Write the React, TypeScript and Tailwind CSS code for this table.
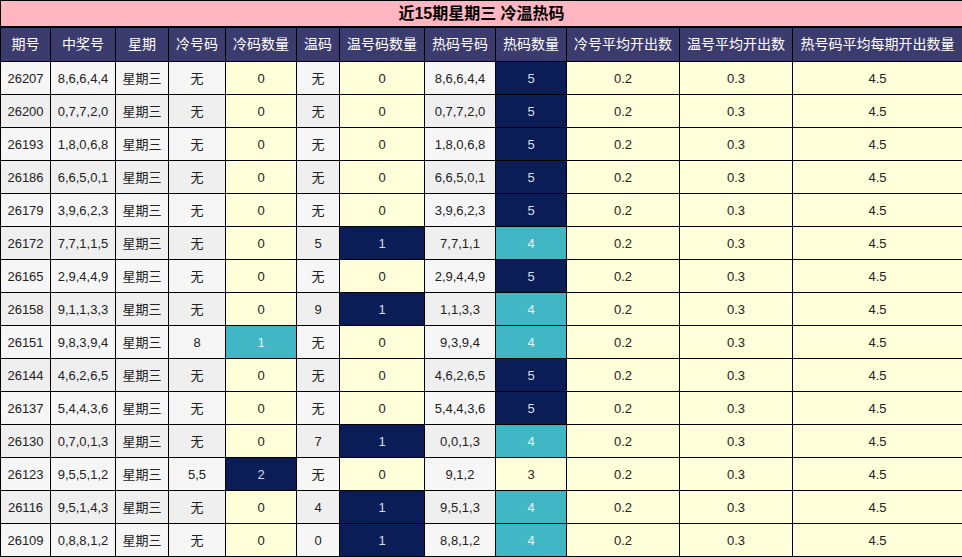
import React from 'react';

interface Row {
  issue: string;
  nums: string;
  cold: string;
  coldCount: number;
  warm: string;
  warmCount: number;
  hot: string;
  hotCount: number;
}

const rows: Row[] = [
  { issue: '26207', nums: '8,6,6,4,4', cold: '无', coldCount: 0, warm: '无', warmCount: 0, hot: '8,6,6,4,4', hotCount: 5 },
  { issue: '26200', nums: '0,7,7,2,0', cold: '无', coldCount: 0, warm: '无', warmCount: 0, hot: '0,7,7,2,0', hotCount: 5 },
  { issue: '26193', nums: '1,8,0,6,8', cold: '无', coldCount: 0, warm: '无', warmCount: 0, hot: '1,8,0,6,8', hotCount: 5 },
  { issue: '26186', nums: '6,6,5,0,1', cold: '无', coldCount: 0, warm: '无', warmCount: 0, hot: '6,6,5,0,1', hotCount: 5 },
  { issue: '26179', nums: '3,9,6,2,3', cold: '无', coldCount: 0, warm: '无', warmCount: 0, hot: '3,9,6,2,3', hotCount: 5 },
  { issue: '26172', nums: '7,7,1,1,5', cold: '无', coldCount: 0, warm: '5', warmCount: 1, hot: '7,7,1,1', hotCount: 4 },
  { issue: '26165', nums: '2,9,4,4,9', cold: '无', coldCount: 0, warm: '无', warmCount: 0, hot: '2,9,4,4,9', hotCount: 5 },
  { issue: '26158', nums: '9,1,1,3,3', cold: '无', coldCount: 0, warm: '9', warmCount: 1, hot: '1,1,3,3', hotCount: 4 },
  { issue: '26151', nums: '9,8,3,9,4', cold: '8', coldCount: 1, warm: '无', warmCount: 0, hot: '9,3,9,4', hotCount: 4 },
  { issue: '26144', nums: '4,6,2,6,5', cold: '无', coldCount: 0, warm: '无', warmCount: 0, hot: '4,6,2,6,5', hotCount: 5 },
  { issue: '26137', nums: '5,4,4,3,6', cold: '无', coldCount: 0, warm: '无', warmCount: 0, hot: '5,4,4,3,6', hotCount: 5 },
  { issue: '26130', nums: '0,7,0,1,3', cold: '无', coldCount: 0, warm: '7', warmCount: 1, hot: '0,0,1,3', hotCount: 4 },
  { issue: '26123', nums: '9,5,5,1,2', cold: '5,5', coldCount: 2, warm: '无', warmCount: 0, hot: '9,1,2', hotCount: 3 },
  { issue: '26116', nums: '9,5,1,4,3', cold: '无', coldCount: 0, warm: '4', warmCount: 1, hot: '9,5,1,3', hotCount: 4 },
  { issue: '26109', nums: '0,8,8,1,2', cold: '无', coldCount: 0, warm: '0', warmCount: 1, hot: '8,8,1,2', hotCount: 4 }
];

const headers = ['期号', '中奖号', '星期', '冷号码', '冷码数量', '温码', '温号码数量', '热码号码', '热码数量', '冷号平均开出数', '温号平均开出数', '热号码平均每期开出数量'];
const widths = ['w-[50px]', 'w-[65px]', 'w-[53px]', 'w-[57px]', 'w-[71px]', 'w-[43px]', 'w-[85px]', 'w-[71px]', 'w-[71px]', 'w-[113px]', 'w-[113px]', 'w-[170px]'];

const NAVY = 'bg-[#0b1d57] text-[#d6dde6]';
const TEAL = 'bg-[#41b6c4] text-[#e4f2f4]';
const YELLOW = 'bg-[#ffffd9] text-[#222]';

const coldClass = (n: number) => (n === 2 ? NAVY : n === 1 ? TEAL : YELLOW);
const warmClass = (n: number) => (n === 1 ? NAVY : YELLOW);
const hotClass = (n: number) => (n === 5 ? NAVY : n === 4 ? TEAL : YELLOW);

const App = () => {
  const td = 'border border-black text-center h-[33px] p-0 pt-[2px]';
  return <div className="w-[962px] h-[557px] overflow-hidden bg-white" style={{ fontFamily: '"Liberation Sans", "Noto Sans CJK SC", sans-serif' }}>
      <table className="table-fixed border-collapse w-[962px] text-[13px] text-[#222]">
        <colgroup>
          {widths.map((w, i) => <col key={i} className={w} />)}
        </colgroup>
        <thead>
          <tr>
            <th colSpan={12} className="border border-black border-b-2 bg-[#ffb6c1] text-black text-[16px] font-bold h-[26px] p-0 pt-px">
              近15期星期三 冷温热码
            </th>
          </tr>
          <tr>
            {headers.map(h => <th key={h} className="border border-black bg-[#3c3b6e] text-white text-[14px] font-normal h-[34px] p-0 pt-px whitespace-nowrap">
                {h}
              </th>)}
          </tr>
        </thead>
        <tbody>
          {rows.map((r, i) => {
          const gray = i % 2 === 0 ? 'bg-[#f6f6f6]' : 'bg-[#efefef]';
          return <tr key={r.issue}>
                <td className={`${td} ${gray}`}>{r.issue}</td>
                <td className={`${td} ${gray}`}>{r.nums}</td>
                <td className={`${td} ${gray}`}>星期三</td>
                <td className={`${td} ${gray}`}>{r.cold}</td>
                <td className={`${td} ${coldClass(r.coldCount)}`}>{r.coldCount}</td>
                <td className={`${td} ${gray}`}>{r.warm}</td>
                <td className={`${td} ${warmClass(r.warmCount)}`}>{r.warmCount}</td>
                <td className={`${td} ${gray}`}>{r.hot}</td>
                <td className={`${td} ${hotClass(r.hotCount)}`}>{r.hotCount}</td>
                <td className={`${td} ${YELLOW}`}>0.2</td>
                <td className={`${td} ${YELLOW}`}>0.3</td>
                <td className={`${td} ${YELLOW}`}>4.5</td>
              </tr>;
        })}
        </tbody>
      </table>
    </div>;
};

export default App;
